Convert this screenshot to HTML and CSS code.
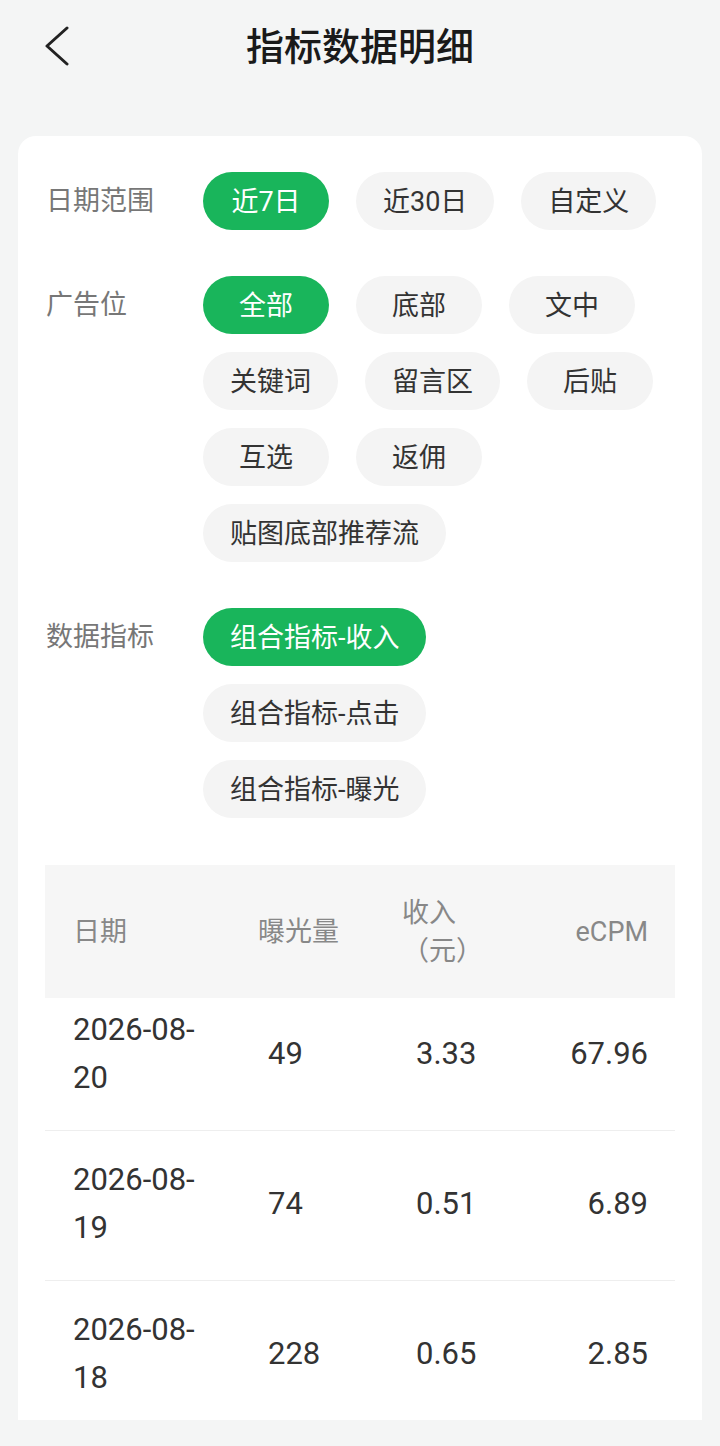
FILE: index.html
```html
<!DOCTYPE html>
<html lang="zh-CN">
<head>
<meta charset="utf-8">
<title>指标数据明细</title>
<link rel="stylesheet" href="styles.css">
</head>
<body>
<div class="page">
  <header class="topbar">
    <div class="back">
      <svg width="26" height="42" viewBox="0 0 26 42"><path d="M23 2 L3 20 L23 38" fill="none" stroke="#222" stroke-width="3" stroke-linecap="round" stroke-linejoin="round"/></svg>
    </div>
    <h1 class="title">指标数据明细</h1>
    <div></div>
  </header>

  <main class="card">
    <section class="filter">
      <div class="label">日期范围</div>
      <div class="chips">
        <span class="chip active">近7日</span>
        <span class="chip">近30日</span>
        <span class="chip">自定义</span>
      </div>
    </section>

    <section class="filter">
      <div class="label">广告位</div>
      <div class="chips">
        <span class="chip active">全部</span>
        <span class="chip">底部</span>
        <span class="chip">文中</span>
        <span class="chip">关键词</span>
        <span class="chip">留言区</span>
        <span class="chip">后贴</span>
        <span class="chip">互选</span>
        <span class="chip">返佣</span>
        <span class="chip">贴图底部推荐流</span>
      </div>
    </section>

    <section class="filter">
      <div class="label">数据指标</div>
      <div class="chips">
        <span class="chip active">组合指标-收入</span>
        <span class="chip">组合指标-点击</span>
        <span class="chip">组合指标-曝光</span>
      </div>
    </section>

    <div class="table">
      <div class="row thead">
        <div class="c1">日期</div>
        <div class="c2">曝光量</div>
        <div class="c3">收入<br>（元）</div>
        <div class="c4">eCPM</div>
      </div>
      <div class="row data first">
        <div class="c1 date">2026-08-<br>20</div>
        <div class="c2 v">49</div>
        <div class="c3 v">3.33</div>
        <div class="c4">67.96</div>
      </div>
      <div class="row data">
        <div class="c1 date">2026-08-<br>19</div>
        <div class="c2 v">74</div>
        <div class="c3 v">0.51</div>
        <div class="c4">6.89</div>
      </div>
      <div class="row data">
        <div class="c1 date">2026-08-<br>18</div>
        <div class="c2 v">228</div>
        <div class="c3 v">0.65</div>
        <div class="c4">2.85</div>
      </div>
    </div>
  </main>
</div>
</body>
</html>
```

FILE: styles.css
```css
* { box-sizing: border-box; }

html, body {
  margin: 0;
  padding: 0;
}

body {
  background: #f4f5f5;
  font-family: Roboto, "Noto Sans CJK SC", sans-serif;
  color: #333;
  height: 1446px;
  overflow: hidden;
}

.topbar {
  height: 94px;
  display: grid;
  grid-template-columns: 1fr auto 1fr;
  align-items: center;
}

.back {
  padding-left: 44px;
  display: flex;
  align-items: center;
}

.back svg { display: block; }

.title {
  margin: 0;
  font-size: 38px;
  font-weight: 500;
  color: #1a1a1a;
  line-height: 1;
}

.card {
  margin: 42px 18px 0;
  background: #fff;
  border-radius: 18px 18px 0 0;
  padding: 36px 27px 0;
  height: 1284px;
  overflow: hidden;
}

.filter {
  display: flex;
  align-items: flex-start;
  margin-bottom: 46px;
}

.filter:nth-of-type(3) { margin-bottom: 47px; }

.label {
  width: 158px;
  flex-shrink: 0;
  padding-left: 1px;
  font-size: 27px;
  line-height: 58px;
  color: #777;
}

.chips {
  flex: 1;
  display: flex;
  flex-wrap: wrap;
  column-gap: 27px;
  row-gap: 18px;
}

.chip {
  display: inline-flex;
  align-items: center;
  justify-content: center;
  height: 58px;
  min-width: 126px;
  padding: 0 27px 4px;
  border-radius: 29px;
  background: #f4f4f4;
  color: #333;
  font-size: 27px;
  white-space: nowrap;
}

.chip.active {
  background: #19b55b;
  color: #fff;
}

.row {
  display: grid;
  grid-template-columns: 185px 144px 120px 1fr;
  padding: 0 27px 0 28px;
  align-items: center;
}

.thead {
  height: 133px;
  background: #f6f6f6;
  font-size: 27px;
  line-height: 38px;
  color: #888;
}

.data {
  padding-top: 25px;
  padding-bottom: 28px;
  border-bottom: 1px solid #eeeeee;
  font-size: 31px;
  line-height: 48px;
  color: #333;
}

.data.first { padding-top: 8px; }

.c2.v { padding-left: 10px; }
.c3.v { padding-left: 14px; }
.c4 { text-align: right; }
```
